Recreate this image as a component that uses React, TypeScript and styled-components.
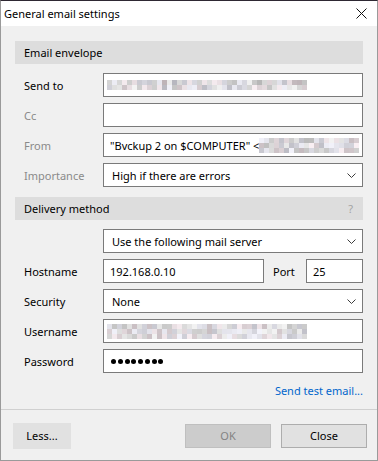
import React from "react";
import styled, { createGlobalStyle } from "styled-components";

const Global = createGlobalStyle`
  html, body { margin: 0; padding: 0; background: #f0f0f0; }
  body { font-family: "Noto Sans", "Open Sans", sans-serif; font-size: 11px; color: #000; }
  * { box-sizing: border-box; }
`;

const Window = styled.div`
  width: 378px;
  height: 461px;
  display: flex;
  flex-direction: column;
  border-top: 1px solid #2e2833;
  border-left: 1px solid #9a9a9a;
  border-right: 1px solid #9a9a9a;
  border-bottom: 1px solid #9a9a9a;
  background: #f0f0f0;
`;

const TitleBar = styled.div`
  height: 25px;
  flex: none;
  background: #fff;
  display: flex;
  align-items: center;
  justify-content: space-between;
  padding: 0 10px 0 3px;
`;

const Title = styled.div`
  font-size: 11px;
  line-height: 16px;
`;

const Content = styled.div`
  flex: 1;
  padding: 15px 14px 0 14px;
  display: flex;
  flex-direction: column;
`;

const SectionHeader = styled.div<{ $mt?: number }>`
  height: 23px;
  background: #dddddd;
  display: flex;
  align-items: center;
  justify-content: space-between;
  padding: 0 10px 0 9px;
  margin-top: ${(p) => p.$mt ?? 0}px;
`;

const Help = styled.span`
  color: #a3a3a3;
`;

const Form = styled.div`
  display: grid;
  grid-template-columns: 79px 1fr;
  row-gap: 6px;
  padding-left: 9px;
  margin-top: 9px;
`;

const Label = styled.div<{ $dim?: boolean }>`
  height: 24px;
  display: flex;
  align-items: center;
  color: ${(p) => (p.$dim ? "#8a8a8a" : "#000")};
`;

const Field = styled.div<{ $w?: number }>`
  height: 24px;
  background: #fff;
  border: 1px solid #7a7a7a;
  display: flex;
  align-items: center;
  padding-left: 6px;
  overflow: hidden;
  white-space: nowrap;
  ${(p) => (p.$w ? `width: ${p.$w}px; flex: none;` : "flex: 1;")}
`;

const Select = styled(Field)`
  padding-left: 8px;
  padding-right: 6px;
  justify-content: space-between;
`;

const MosaicField = styled(Field)`
  padding-left: 3px;
`;

const Spacer = styled.div``;

const Inline = styled.div`
  display: flex;
  align-items: center;
`;

const PortLabel = styled.div`
  width: 42px;
  padding-left: 9px;
`;

const Dots = styled.div`
  display: flex;
  gap: 1.75px;
  padding-left: 1px;
`;

const Dot = styled.span`
  width: 5px;
  height: 5px;
  border-radius: 50%;
  background: #000;
`;

const MosaicGrid = styled.div<{ $cols: number; $cell: number }>`
  display: grid;
  grid-template-columns: repeat(${(p) => p.$cols}, ${(p) => p.$cell}px);
  grid-auto-rows: ${(p) => p.$cell}px;
  flex: none;
`;

const Cell = styled.div``;

const LinkRow = styled.div`
  display: flex;
  justify-content: flex-end;
  margin-top: 10px;
`;

const Link = styled.span`
  color: #0066cc;
`;

const Footer = styled.div`
  flex: none;
  height: 51px;
  border-top: 1px solid #d0d0d0;
  display: flex;
  align-items: center;
  padding: 1px 10px 0 12px;
`;

const Button = styled.div<{ $variant?: "flat" | "disabled" | "normal" }>`
  height: ${(p) => (p.$variant === "flat" ? 26 : 24)}px;
  width: ${(p) => (p.$variant === "flat" ? 58 : 86)}px;
  display: flex;
  align-items: center;
  justify-content: center;
  background: ${(p) => (p.$variant === "disabled" ? "#cccccc" : "#e1e1e1")};
  border: 1px solid
    ${(p) =>
      p.$variant === "disabled" ? "#bfbfbf" : p.$variant === "flat" ? "#e1e1e1" : "#adadad"};
  color: ${(p) => (p.$variant === "disabled" ? "#838383" : "#000")};
`;

const ButtonGroup = styled.div`
  margin-left: auto;
  display: flex;
  gap: 10px;
`;

function rand(seed: number) {
  let s = seed;
  return () => {
    s = (s * 9301 + 49297) % 233280;
    return s / 233280;
  };
}

const Mosaic: React.FC<{ cols: number; rows: number; cell?: number; seed: number; dark?: number }> = ({
  cols,
  rows,
  cell = 5,
  seed,
  dark = 0.5,
}) => {
  const r = rand(seed);
  const cells: string[] = [];
  for (let i = 0; i < cols * rows; i++) {
    const v = r();
    const base = 255 - Math.round(v * 70 * dark + 12);
    const tint = r();
    const rr = base + (tint > 0.7 ? 6 : 0);
    const gg = base - (tint > 0.7 ? 4 : 0);
    const bb = base + (tint < 0.3 ? 8 : 0);
    cells.push(`rgb(${Math.min(rr, 255)},${gg},${Math.min(bb, 255)})`);
  }
  return (
    <MosaicGrid $cols={cols} $cell={cell}>
      {cells.map((c, i) => (
        <Cell key={i} style={{ background: c }} />
      ))}
    </MosaicGrid>
  );
};

const Chevron = () => (
  <svg width="9" height="5" viewBox="0 0 9 5">
    <path d="M0.5 0.5 L4.5 4.5 L8.5 0.5" fill="none" stroke="#3c3c3c" strokeWidth="1" />
  </svg>
);

const CloseIcon = () => (
  <svg width="11" height="11" viewBox="0 0 11 11">
    <path d="M0.5 0.5 L10.5 10.5 M10.5 0.5 L0.5 10.5" stroke="#111" strokeWidth="1" />
  </svg>
);

export default function App() {
  return (
    <>
      <Global />
      <Window>
        <TitleBar>
          <Title>General email settings</Title>
          <CloseIcon />
        </TitleBar>
        <Content>
          <SectionHeader>Email envelope</SectionHeader>
          <Form>
            <Label>Send to</Label>
            <MosaicField>
              <Mosaic cols={40} rows={2} seed={7} dark={0.9} />
            </MosaicField>
            <Label $dim>Cc</Label>
            <Field />
            <Label $dim>From</Label>
            <Field>
              "Bvckup 2 on $COMPUTER" &lt;
              <Mosaic cols={20} rows={3} seed={21} dark={0.8} />
            </Field>
            <Label $dim>Importance</Label>
            <Select>
              High if there are errors
              <Chevron />
            </Select>
          </Form>
          <SectionHeader $mt={10}>
            Delivery method
            <Help>?</Help>
          </SectionHeader>
          <Form>
            <Spacer />
            <Select>
              Use the following mail server
              <Chevron />
            </Select>
            <Label>Hostname</Label>
            <Inline>
              <Field $w={161}>192.168.0.10</Field>
              <PortLabel>Port</PortLabel>
              <Field>25</Field>
            </Inline>
            <Label>Security</Label>
            <Select>
              None
              <Chevron />
            </Select>
            <Label>Username</Label>
            <MosaicField>
              <Mosaic cols={40} rows={3} seed={3} dark={0.7} />
            </MosaicField>
            <Label>Password</Label>
            <Field>
              <Dots>
                {Array.from({ length: 8 }).map((_, i) => (
                  <Dot key={i} />
                ))}
              </Dots>
            </Field>
          </Form>
          <LinkRow>
            <Link>Send test email...</Link>
          </LinkRow>
        </Content>
        <Footer>
          <Button $variant="flat">Less...</Button>
          <ButtonGroup>
            <Button $variant="disabled">OK</Button>
            <Button $variant="normal">Close</Button>
          </ButtonGroup>
        </Footer>
      </Window>
    </>
  );
}
